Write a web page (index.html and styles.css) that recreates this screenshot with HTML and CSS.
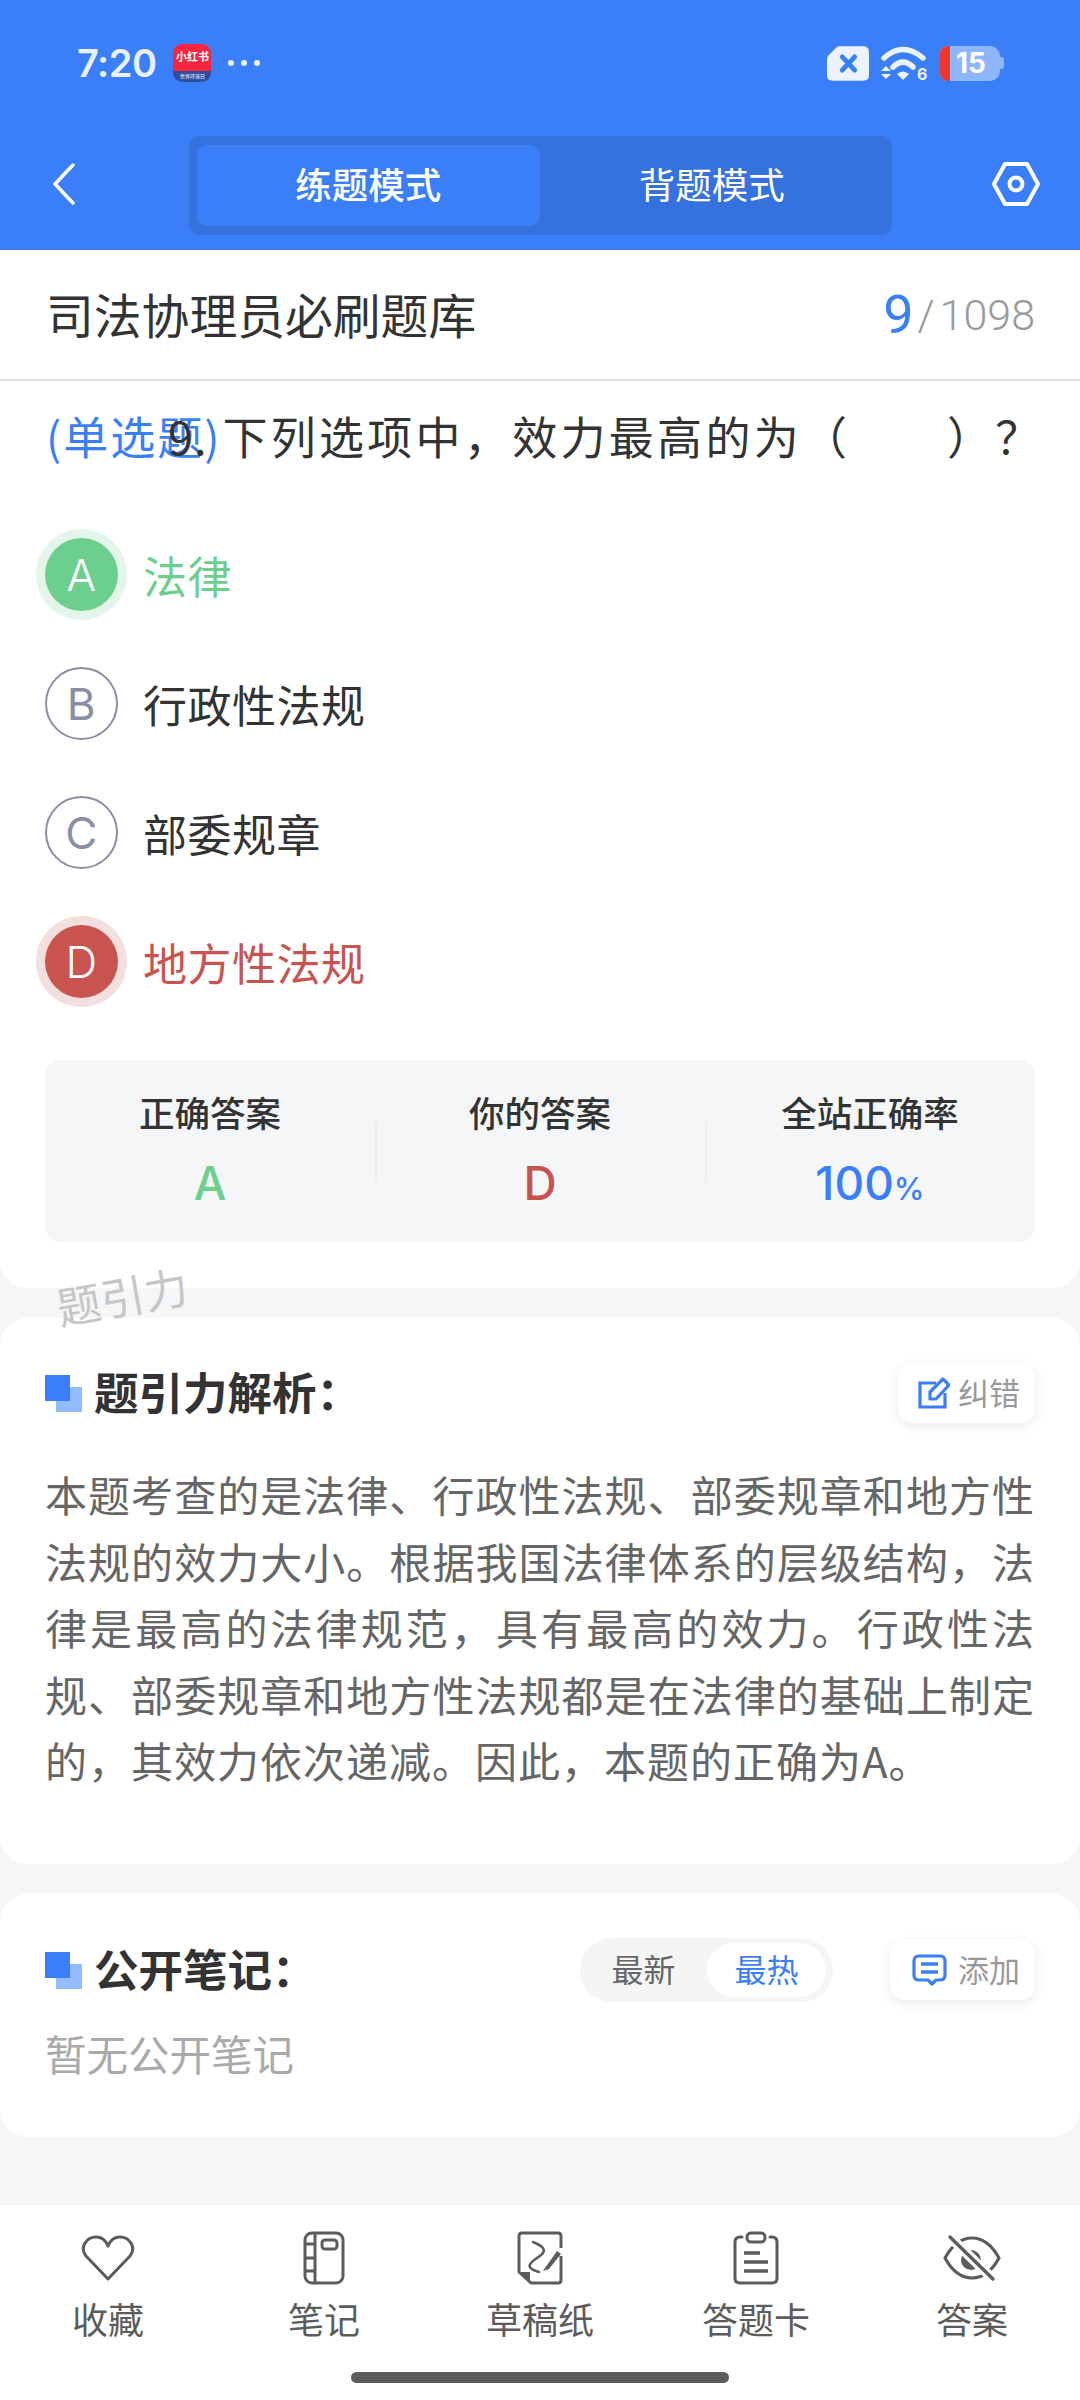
FILE: index.html
```html
<!DOCTYPE html>
<html lang="zh-CN">
   <head>
      <title>司法协理员必刷题库</title>
      <meta charset="UTF-8">
      <meta name="viewport" content="width=device-width, initial-scale=1.0">
      <link rel="stylesheet" href="styles.css">
   </head>
   <body>
      <div class="page">
         <header class="top">
            <div class="status">
               <div class="status-left">
                  <span class="time">7:20</span>
                  <div class="app-icon">
                     <span class="app-name">小红书</span>
                     <span class="app-sub">世界环境日</span>
                  </div>
                  <div class="dots"><i></i><i></i><i></i></div>
               </div>
               <div class="status-right">
                  <svg width="42" height="35" viewBox="0 0 44 36">
                     <path d="M13 0H38Q44 0 44 6V30Q44 36 38 36H6Q0 36 0 30V13Q0 10 3 8L9 2Q11 0 13 0Z" fill="#ecf2fe"/>
                     <path d="M16 11L29 25M29 11L16 25" stroke="#3b7ff8" stroke-width="5" stroke-linecap="round"/>
                  </svg>
                  <svg class="wifi" width="47" height="38" viewBox="0 0 47 38">
                     <path d="M3 12Q22 -5 42 12" fill="none" stroke="#ecf2fe" stroke-width="5.5" stroke-linecap="round"/>
                     <path d="M12 21Q22 11 32 21" fill="none" stroke="#ecf2fe" stroke-width="5.5" stroke-linecap="round"/>
                     <path d="M16 28Q22 23 28 28L22 34Z" fill="#ecf2fe"/>
                     <path d="M0 25L5 20L10 25ZM0 28L10 28L5 33Z" fill="#ecf2fe"/>
                     <text x="36" y="34" class="wifi-six">6</text>
                  </svg>
                  <div class="battery">
                     <i class="battery-low"></i>
                     <span class="battery-num">15</span>
                  </div>
               </div>
            </div>
            <nav class="mode-bar">
               <svg width="24" height="42" viewBox="0 0 24 42">
                  <path d="M21 2L3 21L21 40" fill="none" stroke="#fff" stroke-width="3.5" stroke-linecap="round" stroke-linejoin="round"/>
               </svg>
               <div class="tabs">
                  <div class="tab tab-on">练题模式</div>
                  <div class="tab">背题模式</div>
               </div>
               <svg width="48" height="44" viewBox="0 0 48 44">
                  <path d="M13 2H35L46 22L35 42H13L2 22Z" fill="none" stroke="#fff" stroke-width="4" stroke-linejoin="round"/>
                  <circle cx="24" cy="22" r="6.5" fill="none" stroke="#fff" stroke-width="4"/>
               </svg>
            </nav>
         </header>

         <section class="card card-question">
            <div class="title-row">
               <h1>司法协理员必刷题库</h1>
               <div class="count"><b>9</b><span class="slash">/</span>1098</div>
            </div>
            <div class="question">
               <span class="q-type">(单选题)</span>
               <span class="q-num">9.</span>
               <span class="q-text">下列选项中，效力最高的为（&emsp;&emsp;）？</span>
            </div>
            <div class="options">
               <div class="option right"><span class="letter">A</span><span>法律</span></div>
               <div class="option"><span class="letter">B</span><span>行政性法规</span></div>
               <div class="option"><span class="letter">C</span><span>部委规章</span></div>
               <div class="option wrong"><span class="letter">D</span><span>地方性法规</span></div>
            </div>
            <div class="answers">
               <div class="answer-col">
                  <div class="answer-label">正确答案</div>
                  <div class="answer-value green">A</div>
               </div>
               <div class="answer-col">
                  <div class="answer-label">你的答案</div>
                  <div class="answer-value red">D</div>
               </div>
               <div class="answer-col">
                  <div class="answer-label">全站正确率</div>
                  <div class="answer-value blue">100<small>%</small></div>
               </div>
            </div>
            <div class="watermark">题引力</div>
         </section>

         <section class="card card-analysis">
            <div class="head-row">
               <h2 class="head"><span class="squares"></span>题引力解析：</h2>
               <div class="small-btn">
                  <svg width="32" height="32" viewBox="0 0 32 32">
                     <path d="M18 6H2V30H27V16" fill="none" stroke="#3b7ff8" stroke-width="3.2"/>
                     <path d="M12 22V15L25 2L31 8L18 22Z" fill="none" stroke="#3b7ff8" stroke-width="3.2" stroke-linejoin="round"/>
                  </svg>
                  <span>纠错</span>
               </div>
            </div>
            <p class="analysis">本题考查的是法律、行政性法规、部委规章和地方性法规的效力大小。根据我国法律体系的层级结构，法律是最高的法律规范，具有最高的效力。行政性法规、部委规章和地方性法规都是在法律的基础上制定的，其效力依次递减。因此，本题的正确为A。</p>
         </section>

         <section class="card card-notes">
            <div class="head-row">
               <h2 class="head"><span class="squares"></span>公开笔记：</h2>
               <div class="head-tools">
                  <div class="sort">
                     <span class="sort-item">最新</span>
                     <span class="sort-item sort-on">最热</span>
                  </div>
                  <div class="small-btn small-btn-add">
                     <svg width="35" height="32" viewBox="0 0 35 32">
                        <path d="M7 2H28Q33 2 33 7V21Q33 26 28 26H24L20 30L16 26H7Q2 26 2 21V7Q2 2 7 2Z" fill="none" stroke="#3b7ff8" stroke-width="3.2" stroke-linejoin="round"/>
                        <path d="M9 10H26M9 18H26" stroke="#3b7ff8" stroke-width="3.4"/>
                     </svg>
                     <span>添加</span>
                  </div>
               </div>
            </div>
            <p class="empty">暂无公开笔记</p>
         </section>

         <footer class="tabbar">
            <div class="tabbar-items">
               <div class="tool">
                  <svg width="54" height="46" viewBox="0 0 54 46">
                     <path d="M27 44L5 21C-2 12 6 2 15 2C21 2 25 6 27 11C29 6 33 2 39 2C48 2 56 12 49 21Z" fill="none" stroke="#5c5c5c" stroke-width="3" stroke-linejoin="round"/>
                  </svg>
                  <span>收藏</span>
               </div>
               <div class="tool">
                  <svg width="42" height="54" viewBox="0 0 42 54">
                     <rect x="2" y="2" width="38" height="50" rx="7" fill="none" stroke="#5c5c5c" stroke-width="3"/>
                     <path d="M12 2V52M2 13H12M2 27H12M2 40H12" stroke="#5c5c5c" stroke-width="3"/>
                     <rect x="19" y="9" width="15" height="9" rx="3" fill="none" stroke="#5c5c5c" stroke-width="3"/>
                  </svg>
                  <span>笔记</span>
               </div>
               <div class="tool">
                  <svg width="46" height="54" viewBox="0 0 46 54">
                     <path d="M44 17V5Q44 2 41 2H5Q2 2 2 5V41L14 52H41Q44 52 44 49V25" fill="none" stroke="#5c5c5c" stroke-width="3" stroke-linejoin="round"/>
                     <path d="M2 41H13V52Z" fill="#5c5c5c"/>
                     <path d="M16 11C26 15 30 19 24 24C16 30 4 36 22 41" fill="none" stroke="#5c5c5c" stroke-width="2.5" stroke-linecap="round"/>
                     <path d="M28 37L40 20L44 23L32 38L26 40Z" fill="#5c5c5c"/>
                  </svg>
                  <span>草稿纸</span>
               </div>
               <div class="tool">
                  <svg width="46" height="54" viewBox="0 0 46 54">
                     <path d="M9 6H7Q2 6 2 11V47Q2 52 7 52H39Q44 52 44 47V11Q44 6 39 6H37" fill="none" stroke="#5c5c5c" stroke-width="3" stroke-linecap="round"/>
                     <rect x="14" y="2" width="18" height="9" rx="4" fill="none" stroke="#5c5c5c" stroke-width="3"/>
                     <path d="M11 22H27M11 31H35M11 40H35" stroke="#5c5c5c" stroke-width="3.4"/>
                  </svg>
                  <span>答题卡</span>
               </div>
               <div class="tool">
                  <svg width="58" height="46" viewBox="0 0 58 46">
                     <path d="M2 23Q13 3 29 3Q45 3 56 23Q45 43 29 43Q13 43 2 23Z" fill="none" stroke="#5c5c5c" stroke-width="3.2" stroke-linejoin="round"/>
                     <circle cx="28" cy="25" r="10" fill="#5c5c5c"/>
                     <path d="M7 2L50 44" stroke="#fff" stroke-width="10"/>
                     <path d="M7 2L50 44" stroke="#5c5c5c" stroke-width="3.4" stroke-linecap="round"/>
                  </svg>
                  <span>答案</span>
               </div>
            </div>
            <div class="home-bar"></div>
         </footer>
      </div>
   </body>
</html>
```

FILE: styles.css
```css
*
{ box-sizing:border-box;}
html
{ background-color:#f4f6f8;}
body
{ margin:0;
  font-family:"Noto Sans CJK SC", "Noto Sans", sans-serif;
  color:#333;}
h1, h2, p
{ margin:0;
  font-weight:normal;}
.page
{ width:1080px;
  height:2400px;
  display:flex;
  flex-direction:column;
  overflow:hidden;
  background-color:#f4f6f8;}

/* blue header */
.top
{ height:250px;
  flex:none;
  background-color:#3b7ff8;}
.status
{ height:136px;
  padding:44px 76px 0 77px;
  display:flex;
  justify-content:space-between;
  align-items:flex-start;}
.status-left
{ display:flex;
  align-items:center;
  height:38px;}
.time
{ font-family:Inter, sans-serif;
  font-weight:600;
  font-size:38px;
  letter-spacing:-.5px;
  color:#e9f0fe;}
.app-icon
{ width:38px;
  height:38px;
  margin-left:17px;
  border-radius:9px;
  overflow:hidden;
  background:linear-gradient(#f6253f 70%, #2d4f9c 70%);
  color:#fff;
  display:flex;
  flex-direction:column;
  align-items:center;}
.app-name
{ font-size:11px;
  font-weight:700;
  line-height:20px;
  margin-top:2px;
  white-space:nowrap;}
.app-sub
{ font-size:5px;
  line-height:6px;
  margin-top:7px;
  white-space:nowrap;}
.dots
{ display:flex;
  gap:7px;
  margin-left:17px;}
.dots i
{ width:6px;
  height:6px;
  border-radius:50%;
  background-color:#e9f0fe;}
.status-right
{ display:flex;
  align-items:flex-start;
  gap:12px;
  margin-top:2px;}
.wifi-six
{ font-family:Inter, sans-serif;
  font-weight:700;
  font-size:16px;
  fill:#ecf2fe;}
.battery
{ position:relative;
  width:60px;
  height:35px;
  margin-right:4px;
  flex:none;
  border-radius:8px 10px 10px 8px;
  background-color:#8fb5fb;
  display:flex;
  align-items:center;}
.battery::after
{ content:"";
  position:absolute;
  right:-4px;
  top:11px;
  width:4px;
  height:12px;
  border-radius:0 3px 3px 0;
  background-color:#8fb5fb;}
.battery-low
{ width:10px;
  height:35px;
  border-radius:8px 0 0 8px;
  background-color:#f5352b;}
.battery-num
{ font-family:Inter, sans-serif;
  font-weight:700;
  font-size:28px;
  margin-left:6px;
  color:#fff;
  line-height:35px;}
.mode-bar
{ height:99px;
  padding:0 40px 0 52px;
  display:flex;
  align-items:center;
  justify-content:space-between;}
.mode-bar svg
{ margin-bottom:3px;}
.tabs
{ width:703px;
  height:99px;
  padding:9px 8px;
  margin-left:12px;
  border-radius:10px;
  background-color:#3572dd;
  display:flex;}
.tab
{ flex:1;
  border-radius:10px;
  color:#fff;
  font-size:36.5px;
  padding-bottom:4px;
  display:flex;
  align-items:center;
  justify-content:center;}
.tab-on
{ font-weight:500;
  background-color:#3b7ff8;}

/* cards */
.card
{ background-color:#fff;
  flex:none;
  position:relative;}
.card-question
{ height:1038px;
  border-radius:0 0 28px 28px;}
.card-analysis
{ height:546px;
  margin-top:30px;
  padding:45px 45px 0;
  border-radius:28px;}
.card-notes
{ height:243px;
  margin-top:30px;
  padding:46px 45px 0;
  border-radius:28px;}

.title-row
{ height:131px;
  padding:0 45px 0 46px;
  border-bottom:2px solid #e2e2e2;
  display:flex;
  justify-content:space-between;
  align-items:center;}
.title-row h1
{ font-size:47.8px;
  padding-bottom:2px;
  color:#333;}
.count
{ font-family:Roboto, sans-serif;
  font-weight:300;
  font-size:43px;
  color:#999;
  display:flex;
  align-items:center;}
.count b
{ font-weight:400;
  font-size:54px;
  color:#3b7ff8;}
.slash
{ margin:0 5px 0 4px;}
.question
{ position:relative;
  padding:25px 45px 0 46px;
  height:157px;
  font-size:45px;
  line-height:60px;
  letter-spacing:3.3px;
  display:flex;
  align-items:flex-start;
  white-space:nowrap;}
.q-type
{ color:#3b7ff8;
  letter-spacing:2px;
  margin-right:1px;}
.q-num
{ position:absolute;
  left:168px;
  top:25px;
  letter-spacing:1px;}
.options
{ display:flex;
  flex-direction:column;
  gap:56px;
  padding-left:45px;}
.option
{ display:flex;
  align-items:center;
  height:73px;
  gap:25px;
  font-size:44px;
  letter-spacing:.5px;
  color:#333;}
.letter
{ width:73px;
  height:73px;
  flex:none;
  border-radius:50%;
  border:2px solid #8b8fa3;
  color:#8b8fa3;
  font-family:Inter, sans-serif;
  font-size:44px;
  font-weight:400;
  display:flex;
  align-items:center;
  justify-content:center;}
.right
{ color:#6ccf8e;}
.right .letter
{ background-color:#6ccf8e;
  border:none;
  color:#fff;
  font-weight:300;
  box-shadow:0 0 0 9px #e3f6e9;}
.wrong
{ color:#c9534f;}
.wrong .letter
{ background-color:#c9534f;
  border:none;
  color:#fff;
  font-weight:300;
  box-shadow:0 0 0 9px #f4dfdf;}

.answers
{ margin:62px 45px 0;
  height:182px;
  padding-top:26px;
  border-radius:16px;
  background-color:#f4f6f8;
  display:grid;
  grid-template-columns:repeat(3, 1fr);}
.answer-col
{ height:120px;
  text-align:center;}
.answer-col + .answer-col
{ background:linear-gradient(#eceef1, #eceef1) left 35px / 2px 60px no-repeat;}
.answer-label
{ font-size:35.5px;
  font-weight:500;
  line-height:52px;
  color:#333;}
.answer-value
{ font-family:Inter, sans-serif;
  font-size:46px;
  font-weight:500;
  line-height:60px;
  margin-top:15px;}
.answer-value small
{ font-size:31px;}
.green
{ color:#6ccf8e;}
.red
{ color:#c9534f;}
.blue
{ color:#3b7ff8;}
.watermark
{ position:absolute;
  left:56px;
  bottom:-37px;
  z-index:2;
  font-size:44px;
  line-height:60px;
  color:#c6c6c6;
  transform:rotate(-10deg);}

.head-row
{ display:flex;
  justify-content:space-between;
  align-items:center;
  height:60px;}
.head
{ display:flex;
  align-items:center;
  font-size:44.5px;
  font-weight:700;
  color:#333;}
.head-row .head
{ line-height:60px;
  margin-top:-4px;}
.squares
{ position:relative;
  width:37px;
  height:37px;
  margin-top:4px;
  margin-right:12px;
  flex:none;
  background:linear-gradient(#3b7ff8, #3b7ff8) left top / 25px 26px no-repeat,
             linear-gradient(#92bcfb, #92bcfb) right bottom / 26px 25px no-repeat;}
.small-btn
{ height:60px;
  padding:0 15px 0 20px;
  border-radius:14px;
  background-color:#fff;
  box-shadow:0 3px 12px rgba(0, 0, 0, .09);
  display:flex;
  align-items:center;
  gap:8px;
  font-size:31px;
  color:#999;}
.small-btn span
{ margin-top:-4px;}
.small-btn-add
{ padding-left:22px;
  gap:11px;}
.analysis
{ margin-top:38px;
  font-size:42px;
  line-height:66.6px;
  letter-spacing:1px;
  color:#666;
  text-align:justify;}

.head-tools
{ display:flex;
  align-items:center;
  gap:57px;}
.sort
{ width:253px;
  height:64px;
  padding:5px 7px 5px 0;
  border-radius:32px;
  background-color:#f5f5f5;
  display:flex;
  align-items:center;
  font-size:32px;}
.sort-item
{ flex:1;
  height:54px;
  padding-bottom:4px;
  color:#666;
  display:flex;
  align-items:center;
  justify-content:center;}
.sort-on
{ flex:none;
  width:119px;
  border-radius:27px;
  background-color:#fff;
  color:#3b7ff8;}
.empty
{ margin-top:23px;
  font-size:41.5px;
  color:#aaa;}

/* bottom bar */
.tabbar
{ margin-top:auto;
  height:196px;
  flex:none;
  background-color:#fff;
  border-top:1px solid #eeeff1;}
.tabbar-items
{ display:grid;
  grid-template-columns:repeat(5, 216px);
  height:167px;
  padding-top:25px;}
.tool
{ display:flex;
  flex-direction:column;
  align-items:center;
  font-size:36px;
  line-height:50px;
  color:#5c5c5c;}
.tool svg
{ height:56px;
  margin-bottom:7px;}
.home-bar
{ width:378px;
  height:11px;
  margin:0 auto;
  border-radius:6px;
  background-color:#5c5c5c;}
```
